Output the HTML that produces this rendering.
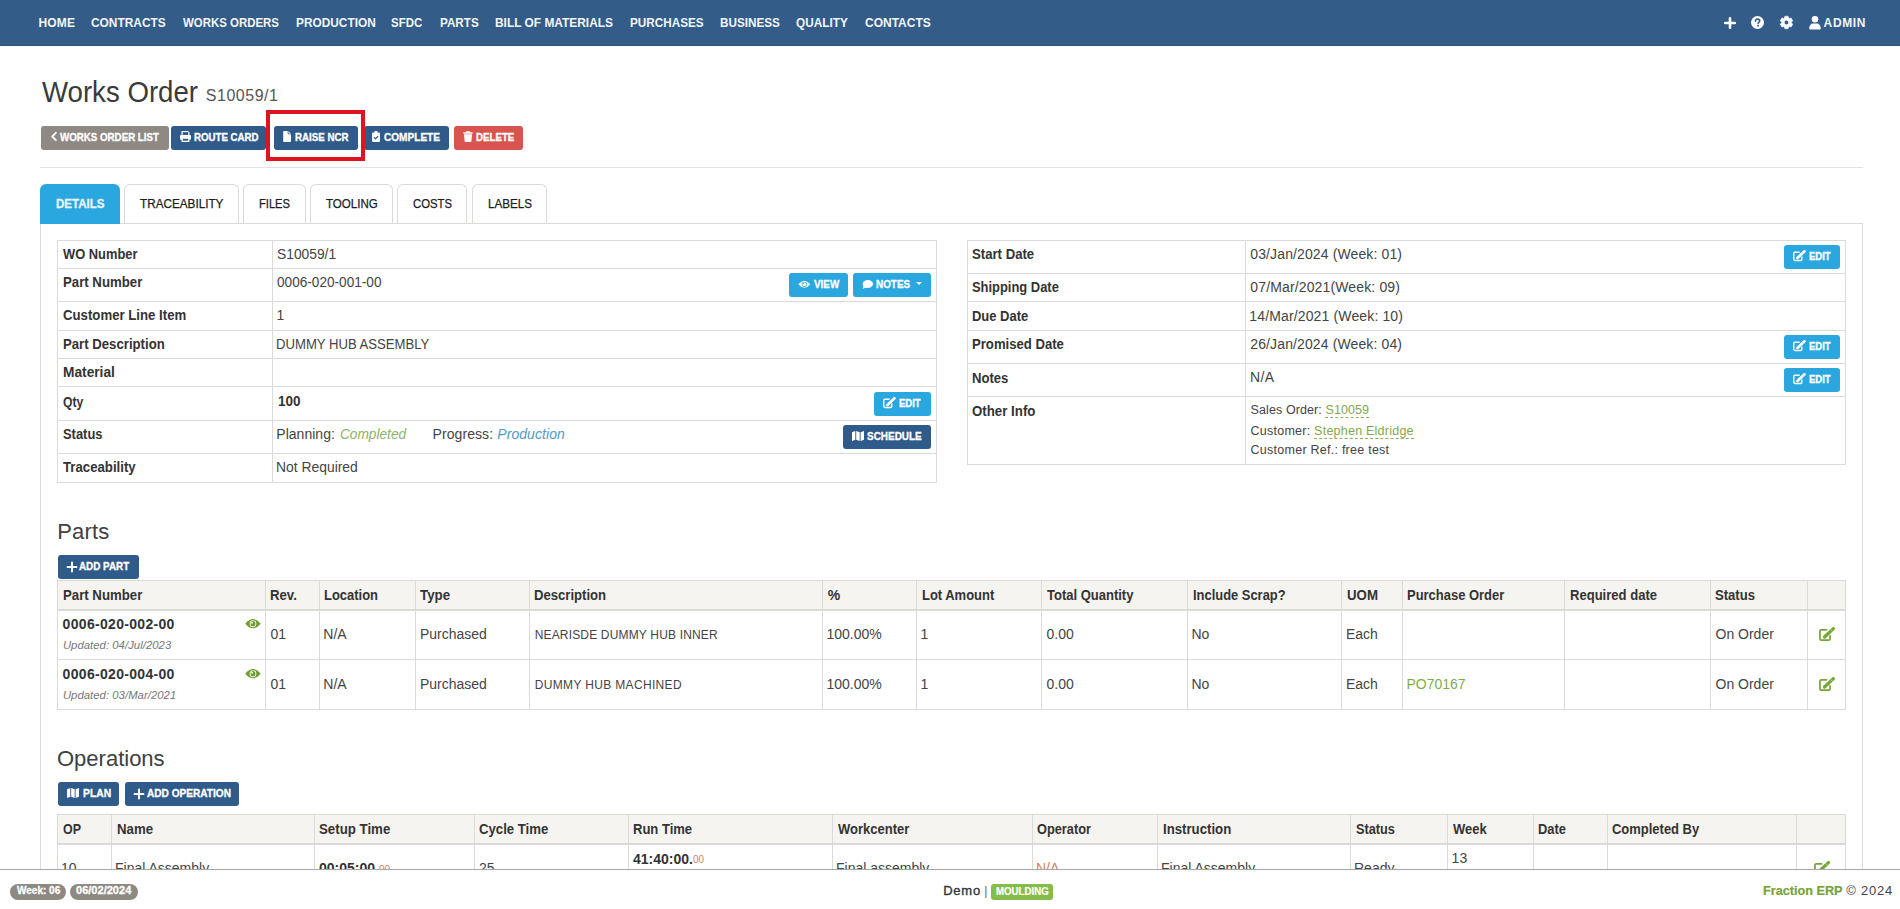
<!DOCTYPE html>
<html><head><meta charset="utf-8"><title>Works Order</title>
<style>
html,body{margin:0;padding:0;background:#fff;width:1900px;height:909px;overflow:hidden;}
body{position:relative;font-family:"Liberation Sans",sans-serif;}
.t{position:absolute;white-space:nowrap;line-height:1;}
.r{position:absolute;}
svg.r{overflow:visible}
.lk{color:#83a84c;border-bottom:1px dashed #8fae60;}
</style></head><body>
<div class="r" style="left:0px;top:0px;width:1900px;height:46px;background:#335c88;"></div>
<div class="r" style="left:0px;top:45px;width:1900px;height:1px;background:#30517a;"></div>
<div class="t" style="left:38.40px;top:16.84px;font-size:12px;color:#f3f6fa;font-weight:bold;letter-spacing:0.201px;">HOME</div>
<div class="t" style="left:91.40px;top:16.84px;font-size:12px;color:#f3f6fa;font-weight:bold;transform:scaleX(0.9917);transform-origin:0 0;">CONTRACTS</div>
<div class="t" style="left:182.60px;top:16.84px;font-size:12px;color:#f3f6fa;font-weight:bold;transform:scaleX(0.9536);transform-origin:0 0;">WORKS ORDERS</div>
<div class="t" style="left:295.50px;top:16.84px;font-size:12px;color:#f3f6fa;font-weight:bold;transform:scaleX(0.9887);transform-origin:0 0;">PRODUCTION</div>
<div class="t" style="left:391.10px;top:16.84px;font-size:12px;color:#f3f6fa;font-weight:bold;transform:scaleX(0.9545);transform-origin:0 0;">SFDC</div>
<div class="t" style="left:439.50px;top:16.84px;font-size:12px;color:#f3f6fa;font-weight:bold;transform:scaleX(0.9730);transform-origin:0 0;">PARTS</div>
<div class="t" style="left:494.80px;top:16.84px;font-size:12px;color:#f3f6fa;font-weight:bold;transform:scaleX(0.9925);transform-origin:0 0;">BILL OF MATERIALS</div>
<div class="t" style="left:629.60px;top:16.84px;font-size:12px;color:#f3f6fa;font-weight:bold;transform:scaleX(0.9769);transform-origin:0 0;">PURCHASES</div>
<div class="t" style="left:720.00px;top:16.84px;font-size:12px;color:#f3f6fa;font-weight:bold;transform:scaleX(0.9748);transform-origin:0 0;">BUSINESS</div>
<div class="t" style="left:796.00px;top:16.84px;font-size:12px;color:#f3f6fa;font-weight:bold;transform:scaleX(0.9837);transform-origin:0 0;">QUALITY</div>
<div class="t" style="left:864.60px;top:16.84px;font-size:12px;color:#f3f6fa;font-weight:bold;transform:scaleX(0.9990);transform-origin:0 0;">CONTACTS</div>
<div class="t" style="left:1823.60px;top:16.84px;font-size:12px;color:#f3f6fa;font-weight:bold;letter-spacing:0.634px;">ADMIN</div>
<svg class="r" style="left:1723.5px;top:16.5px" width="12" height="12" viewBox="0 0 12 12"><path d="M6 1.2v9.6M1.2 6h9.6" stroke="#fff" stroke-width="2.6" stroke-linecap="round"/></svg>
<svg class="r" style="left:1751px;top:16px" width="13" height="13" viewBox="0 0 13 13"><circle cx="6.5" cy="6.5" r="6.5" fill="#fff"/><path d="M4.5 5.2c0-1.3.9-2.1 2.1-2.1 1.2 0 2.1.8 2.1 1.9 0 1.4-1.6 1.5-1.6 2.5" stroke="#335c88" stroke-width="1.6" fill="none" stroke-linecap="round"/><circle cx="7" cy="9.7" r="0.95" fill="#335c88"/></svg>
<svg class="r" style="left:1779.8px;top:15.8px" width="13" height="13" viewBox="0 0 13 13"><path d="M4.83 0.22 L8.17 0.22 L8.68 2.11 L9.21 2.42 L11.10 1.91 L12.78 4.81 L11.39 6.19 L11.39 6.81 L12.78 8.19 L11.10 11.09 L9.21 10.58 L8.68 10.89 L8.17 12.78 L4.83 12.78 L4.32 10.89 L3.79 10.58 L1.90 11.09 L0.22 8.19 L1.61 6.81 L1.61 6.19 L0.22 4.81 L1.90 1.91 L3.79 2.42 L4.32 2.11Z" fill="#fff" stroke="#fff" stroke-width="0.5" stroke-linejoin="round"/><circle cx="6.5" cy="6.5" r="1.9" fill="#335c88"/></svg>
<svg class="r" style="left:1808.5px;top:16px" width="12" height="14" viewBox="0 0 12 14"><circle cx="6" cy="3.3" r="3.3" fill="#fff"/><path d="M0.2 12.6c0-3 1.7-5 3.8-5h4c2.1 0 3.8 2 3.8 5 0 .5-.4.8-.8.8H1c-.5 0-.8-.3-.8-.8z" fill="#fff"/></svg>
<div class="t" style="left:41.60px;top:76.81px;font-size:30px;color:#3a3a3a;transform:scaleX(0.9205);transform-origin:0 0;">Works Order</div>
<div class="t" style="left:205.80px;top:88.46px;font-size:16px;color:#555;letter-spacing:0.513px;">S10059/1</div>
<div class="r" style="left:41px;top:126px;width:128px;height:24px;background:#8e8a83;border-radius:3px;"></div>
<div class="r" style="left:171px;top:126px;width:95px;height:24px;background:#2f5b8a;border-radius:3px;"></div>
<div class="r" style="left:274px;top:126px;width:84px;height:24px;background:#2f5b8a;border-radius:3px;"></div>
<div class="r" style="left:364px;top:126px;width:85px;height:24px;background:#2f5b8a;border-radius:3px;"></div>
<div class="r" style="left:454px;top:126px;width:69px;height:24px;background:#d9534f;border-radius:3px;"></div>
<div class="t" style="left:59.80px;top:132.11px;font-size:10.5px;color:#fff;font-weight:bold;transform:scaleX(0.9270);transform-origin:0 0;-webkit-text-stroke:0.3px #fff;">WORKS ORDER LIST</div>
<div class="t" style="left:194.20px;top:132.11px;font-size:10.5px;color:#fff;font-weight:bold;transform:scaleX(0.9231);transform-origin:0 0;-webkit-text-stroke:0.3px #fff;">ROUTE CARD</div>
<div class="t" style="left:294.50px;top:132.11px;font-size:10.5px;color:#fff;font-weight:bold;transform:scaleX(0.9283);transform-origin:0 0;-webkit-text-stroke:0.3px #fff;">RAISE NCR</div>
<div class="t" style="left:383.50px;top:132.11px;font-size:10.5px;color:#fff;font-weight:bold;transform:scaleX(0.9600);transform-origin:0 0;-webkit-text-stroke:0.3px #fff;">COMPLETE</div>
<div class="t" style="left:475.60px;top:132.11px;font-size:10.5px;color:#fff;font-weight:bold;transform:scaleX(0.9247);transform-origin:0 0;-webkit-text-stroke:0.3px #fff;">DELETE</div>
<svg class="r" style="left:50.5px;top:132px" width="6" height="9" viewBox="0 0 6 9"><path d="M4.9 0.9L1.2 4.5L4.9 8.1" stroke="#fff" stroke-width="1.9" fill="none" stroke-linecap="round" stroke-linejoin="round"/></svg>
<svg class="r" style="left:180px;top:131px" width="11" height="11" viewBox="0 0 11 11"><path d="M1.5 0h6.6l1.4 1.4V4H1.5z" fill="#fff"/><rect x="2.7" y="1.1" width="5.6" height="2.9" fill="#2f5b8a"/><rect x="0" y="3.9" width="11" height="4.8" rx="1.2" fill="#fff"/><rect x="1.5" y="6.6" width="8" height="4.4" rx="0.4" fill="#fff"/><rect x="2.8" y="7.8" width="5.4" height="1.9" fill="#2f5b8a"/></svg>
<svg class="r" style="left:283px;top:131px" width="8" height="11" viewBox="0 0 8 11"><path d="M0.2 0.8Q0.2 0 1 0H5.2L8 2.8V10.2Q8 11 7.2 11H1Q0.2 11 0.2 10.2z" fill="#fff"/><path d="M5.1 0V2.9H8" stroke="#2f5b8a" stroke-width="0.8" fill="none"/></svg>
<svg class="r" style="left:372px;top:131px" width="8" height="11" viewBox="0 0 8 11"><rect x="0" y="1.5" width="8" height="9.4" rx="1" fill="#fff"/><rect x="2.4" y="0" width="3.2" height="2.2" rx="0.8" fill="#fff"/><path d="M2 6.4L3.5 7.9L6.1 5.1" stroke="#2f5b8a" stroke-width="1.3" fill="none"/></svg>
<svg class="r" style="left:463px;top:131px" width="10" height="11" viewBox="0 0 10 11"><path d="M3.3 0.2h3.4l0.5 1H9.6v1.5H0.4V1.2h2.4z" fill="#fff"/><path d="M1 3.3H9L8.4 10.2Q8.3 10.9 7.6 10.9H2.4Q1.7 10.9 1.6 10.2z" fill="#fff"/></svg>
<div class="r" style="left:266px;top:110px;width:91px;height:43px;border:4px solid #e0141e;"></div>
<div class="r" style="left:40px;top:167px;width:1823px;height:1px;background:#e3e3e3;"></div>
<div class="r" style="left:40px;top:223px;width:1821px;height:700px;border:1px solid #dbdad6;border-bottom:none"></div>
<div class="r" style="left:40px;top:184px;width:80px;height:40px;background:#2aa7de;border-radius:6px 6px 0 0"></div>
<div class="r" style="left:124px;top:184px;width:113px;height:38px;border:1px solid #dbdad6;border-bottom:none;border-radius:6px 6px 0 0;background:#fff"></div>
<div class="r" style="left:243px;top:184px;width:61px;height:38px;border:1px solid #dbdad6;border-bottom:none;border-radius:6px 6px 0 0;background:#fff"></div>
<div class="r" style="left:310px;top:184px;width:81px;height:38px;border:1px solid #dbdad6;border-bottom:none;border-radius:6px 6px 0 0;background:#fff"></div>
<div class="r" style="left:397px;top:184px;width:68px;height:38px;border:1px solid #dbdad6;border-bottom:none;border-radius:6px 6px 0 0;background:#fff"></div>
<div class="r" style="left:472px;top:184px;width:73px;height:38px;border:1px solid #dbdad6;border-bottom:none;border-radius:6px 6px 0 0;background:#fff"></div>
<div class="t" style="left:55.70px;top:197.64px;font-size:12px;color:#eaf6fc;font-weight:bold;transform:scaleX(0.9615);transform-origin:0 0;-webkit-text-stroke:0.3px #eaf6fc;">DETAILS</div>
<div class="t" style="left:140.00px;top:197.64px;font-size:12px;color:#1c1c1c;transform:scaleX(0.9772);transform-origin:0 0;-webkit-text-stroke:0.25px #1c1c1c;">TRACEABILITY</div>
<div class="t" style="left:258.50px;top:197.64px;font-size:12px;color:#1c1c1c;transform:scaleX(0.9298);transform-origin:0 0;-webkit-text-stroke:0.25px #1c1c1c;">FILES</div>
<div class="t" style="left:326.40px;top:197.64px;font-size:12px;color:#1c1c1c;transform:scaleX(0.9616);transform-origin:0 0;-webkit-text-stroke:0.25px #1c1c1c;">TOOLING</div>
<div class="t" style="left:413.40px;top:197.64px;font-size:12px;color:#1c1c1c;transform:scaleX(0.9435);transform-origin:0 0;-webkit-text-stroke:0.25px #1c1c1c;">COSTS</div>
<div class="t" style="left:488.00px;top:197.64px;font-size:12px;color:#1c1c1c;transform:scaleX(0.9700);transform-origin:0 0;-webkit-text-stroke:0.25px #1c1c1c;">LABELS</div>
<div class="r" style="left:57px;top:240px;width:1px;height:243px;background:#dbdad6;"></div>
<div class="r" style="left:272px;top:240px;width:1px;height:243px;background:#dbdad6;"></div>
<div class="r" style="left:936px;top:240px;width:1px;height:243px;background:#dbdad6;"></div>
<div class="r" style="left:57px;top:240px;width:880px;height:1px;background:#dbdad6;"></div>
<div class="r" style="left:57px;top:268px;width:880px;height:1px;background:#dbdad6;"></div>
<div class="r" style="left:57px;top:301px;width:880px;height:1px;background:#dbdad6;"></div>
<div class="r" style="left:57px;top:330px;width:880px;height:1px;background:#dbdad6;"></div>
<div class="r" style="left:57px;top:358px;width:880px;height:1px;background:#dbdad6;"></div>
<div class="r" style="left:57px;top:386px;width:880px;height:1px;background:#dbdad6;"></div>
<div class="r" style="left:57px;top:420px;width:880px;height:1px;background:#dbdad6;"></div>
<div class="r" style="left:57px;top:453px;width:880px;height:1px;background:#dbdad6;"></div>
<div class="r" style="left:57px;top:482px;width:880px;height:1px;background:#dbdad6;"></div>
<div class="t" style="left:62.65px;top:247.25px;font-size:14px;color:#333;font-weight:bold;transform:scaleX(0.9209);transform-origin:0 0;">WO Number</div>
<div class="t" style="left:62.65px;top:275.45px;font-size:14px;color:#333;font-weight:bold;transform:scaleX(0.9436);transform-origin:0 0;">Part Number</div>
<div class="t" style="left:62.65px;top:308.05px;font-size:14px;color:#333;font-weight:bold;transform:scaleX(0.9429);transform-origin:0 0;">Customer Line Item</div>
<div class="t" style="left:62.65px;top:337.15px;font-size:14px;color:#333;font-weight:bold;transform:scaleX(0.9406);transform-origin:0 0;">Part Description</div>
<div class="t" style="left:62.65px;top:365.45px;font-size:14px;color:#333;font-weight:bold;transform:scaleX(0.9804);transform-origin:0 0;">Material</div>
<div class="t" style="left:62.65px;top:394.85px;font-size:14px;color:#333;font-weight:bold;transform:scaleX(0.8704);transform-origin:0 0;">Qty</div>
<div class="t" style="left:62.65px;top:427.45px;font-size:14px;color:#333;font-weight:bold;transform:scaleX(0.9233);transform-origin:0 0;">Status</div>
<div class="t" style="left:62.65px;top:460.15px;font-size:14px;color:#333;font-weight:bold;transform:scaleX(0.9436);transform-origin:0 0;">Traceability</div>
<div class="t" style="left:277.20px;top:247.05px;font-size:14px;color:#444;transform:scaleX(0.9857);transform-origin:0 0;">S10059/1</div>
<div class="t" style="left:277.40px;top:275.15px;font-size:14px;color:#444;transform:scaleX(0.9727);transform-origin:0 0;">0006-020-001-00</div>
<div class="t" style="left:276.50px;top:307.75px;font-size:14px;color:#444;">1</div>
<div class="t" style="left:276.16px;top:336.85px;font-size:14px;color:#444;transform:scaleX(0.9372);transform-origin:0 0;">DUMMY HUB ASSEMBLY</div>
<div class="t" style="left:277.80px;top:394.05px;font-size:14px;color:#333;font-weight:bold;transform:scaleX(0.9630);transform-origin:0 0;">100</div>
<div class="t" style="left:276.30px;top:426.65px;font-size:14px;color:#444;letter-spacing:0.026px;">Planning:</div>
<div class="t" style="left:339.70px;top:426.65px;font-size:14px;color:#8db26a;font-style:italic;transform:scaleX(0.9765);transform-origin:0 0;">Completed</div>
<div class="t" style="left:432.60px;top:426.65px;font-size:14px;color:#444;letter-spacing:0.072px;">Progress:</div>
<div class="t" style="left:497.30px;top:426.65px;font-size:14px;color:#4f9bcb;font-style:italic;letter-spacing:0.062px;">Production</div>
<div class="t" style="left:276.31px;top:459.65px;font-size:14px;color:#444;transform:scaleX(0.9913);transform-origin:0 0;">Not Required</div>
<div class="r" style="left:789px;top:273px;width:59px;height:24px;background:#2aa7de;border-radius:3px;"></div>
<div class="r" style="left:853px;top:273px;width:78px;height:24px;background:#2aa7de;border-radius:3px;"></div>
<div class="t" style="left:813.70px;top:278.81px;font-size:10.5px;color:#fff;font-weight:bold;transform:scaleX(0.9397);transform-origin:0 0;-webkit-text-stroke:0.3px #fff;">VIEW</div>
<div class="t" style="left:876.00px;top:278.81px;font-size:10.5px;color:#fff;font-weight:bold;transform:scaleX(0.9428);transform-origin:0 0;-webkit-text-stroke:0.3px #fff;">NOTES</div>
<svg class="r" style="left:797.6px;top:279.6px" width="12.6" height="8.6" viewBox="0 0 16 11" preserveAspectRatio="none"><path d="M0.3 5.5Q8 -3.5 15.7 5.5Q8 14.5 0.3 5.5z" fill="#fff"/><circle cx="8" cy="5.5" r="3.4" fill="#2aa7de"/><circle cx="8" cy="5.5" r="2.5" fill="#fff"/><circle cx="7.1" cy="4.6" r="0.9" fill="#2aa7de"/></svg>
<svg class="r" style="left:861.7px;top:279.8px" width="11" height="9" viewBox="0 0 11 9"><ellipse cx="5.8" cy="4" rx="5.2" ry="4" fill="#fff"/><path d="M1.6 5.5L0.6 8.8L4.5 7.4z" fill="#fff"/></svg>
<svg class="r" style="left:916.2px;top:282.3px" width="6" height="3" viewBox="0 0 6 3"><path d="M0 0H6L3 3z" fill="#fff"/></svg>
<div class="r" style="left:874px;top:392px;width:57px;height:24px;background:#2aa7de;border-radius:3px;"></div>
<svg class="r" style="left:883px;top:397.3px" width="12.80" height="11.20" viewBox="0 0 16 14"><path d="M8.3 2.75H2.3Q0.95 2.75 0.95 4.1V11.7Q0.95 13.05 2.3 13.05H9.7Q11.05 13.05 11.05 11.7V8.2" stroke="#fff" stroke-width="1.75" fill="none"/><path d="M5.5 10L14.4 1.6" stroke="#fff" stroke-width="3.3" stroke-linecap="round"/><path d="M11.9 2.6L13.6 4.5" stroke="#2aa7de" stroke-width="0.6" opacity="0.8"/></svg>
<div class="t" style="left:898.90px;top:398.11px;font-size:10.5px;color:#fff;font-weight:bold;transform:scaleX(0.9019);transform-origin:0 0;-webkit-text-stroke:0.3px #fff;">EDIT</div>
<div class="r" style="left:843px;top:425px;width:88px;height:24px;background:#2f5b8a;border-radius:3px;"></div>
<svg class="r" style="left:852px;top:430.5px" width="12" height="10" viewBox="0 0 12 10"><path d="M0 1.2L3.3 0V8.8L0 10z" fill="#fff"/><path d="M4.2 0L7.7 1.2V10L4.2 8.8z" fill="#fff"/><path d="M8.6 1.2L12 0V8.8L8.6 10z" fill="#fff"/></svg>
<div class="t" style="left:867.00px;top:431.11px;font-size:10.5px;color:#fff;font-weight:bold;transform:scaleX(0.9472);transform-origin:0 0;-webkit-text-stroke:0.3px #fff;">SCHEDULE</div>
<div class="r" style="left:967px;top:240px;width:1px;height:225px;background:#dbdad6;"></div>
<div class="r" style="left:1245px;top:240px;width:1px;height:225px;background:#dbdad6;"></div>
<div class="r" style="left:1845px;top:240px;width:1px;height:225px;background:#dbdad6;"></div>
<div class="r" style="left:967px;top:240px;width:879px;height:1px;background:#dbdad6;"></div>
<div class="r" style="left:967px;top:273px;width:879px;height:1px;background:#dbdad6;"></div>
<div class="r" style="left:967px;top:301px;width:879px;height:1px;background:#dbdad6;"></div>
<div class="r" style="left:967px;top:330px;width:879px;height:1px;background:#dbdad6;"></div>
<div class="r" style="left:967px;top:363px;width:879px;height:1px;background:#dbdad6;"></div>
<div class="r" style="left:967px;top:396px;width:879px;height:1px;background:#dbdad6;"></div>
<div class="r" style="left:967px;top:464px;width:879px;height:1px;background:#dbdad6;"></div>
<div class="t" style="left:971.90px;top:247.35px;font-size:14px;color:#333;font-weight:bold;transform:scaleX(0.9405);transform-origin:0 0;">Start Date</div>
<div class="t" style="left:971.90px;top:280.05px;font-size:14px;color:#333;font-weight:bold;transform:scaleX(0.9224);transform-origin:0 0;">Shipping Date</div>
<div class="t" style="left:971.90px;top:308.85px;font-size:14px;color:#333;font-weight:bold;transform:scaleX(0.9262);transform-origin:0 0;">Due Date</div>
<div class="t" style="left:971.90px;top:337.45px;font-size:14px;color:#333;font-weight:bold;transform:scaleX(0.9374);transform-origin:0 0;">Promised Date</div>
<div class="t" style="left:971.90px;top:370.65px;font-size:14px;color:#333;font-weight:bold;transform:scaleX(0.9358);transform-origin:0 0;">Notes</div>
<div class="t" style="left:971.90px;top:404.45px;font-size:14px;color:#333;font-weight:bold;transform:scaleX(0.9483);transform-origin:0 0;">Other Info</div>
<div class="t" style="left:1250.30px;top:247.35px;font-size:14px;color:#444;letter-spacing:0.119px;">03/Jan/2024 (Week: 01)</div>
<div class="t" style="left:1250.30px;top:279.75px;font-size:14px;color:#444;letter-spacing:0.142px;">07/Mar/2021(Week: 09)</div>
<div class="t" style="left:1249.30px;top:308.55px;font-size:14px;color:#444;letter-spacing:0.141px;">14/Mar/2021 (Week: 10)</div>
<div class="t" style="left:1250.30px;top:337.15px;font-size:14px;color:#444;letter-spacing:0.119px;">26/Jan/2024 (Week: 04)</div>
<div class="t" style="left:1250.00px;top:369.85px;font-size:14px;color:#444;letter-spacing:0.350px;">N/A</div>
<div class="t" style="left:1250.60px;top:403.92px;font-size:12.5px;color:#444;letter-spacing:0.095px;">Sales Order: <span class="lk">S10059</span></div>
<div class="t" style="left:1250.60px;top:424.92px;font-size:12.5px;color:#444;letter-spacing:0.237px;">Customer: <span class="lk">Stephen Eldridge</span></div>
<div class="t" style="left:1250.60px;top:443.92px;font-size:12.5px;color:#444;letter-spacing:0.252px;">Customer Ref.: free test</div>
<div class="r" style="left:1784px;top:245px;width:56px;height:24px;background:#2aa7de;border-radius:3px;"></div>
<svg class="r" style="left:1793px;top:250.3px" width="12.80" height="11.20" viewBox="0 0 16 14"><path d="M8.3 2.75H2.3Q0.95 2.75 0.95 4.1V11.7Q0.95 13.05 2.3 13.05H9.7Q11.05 13.05 11.05 11.7V8.2" stroke="#fff" stroke-width="1.75" fill="none"/><path d="M5.5 10L14.4 1.6" stroke="#fff" stroke-width="3.3" stroke-linecap="round"/><path d="M11.9 2.6L13.6 4.5" stroke="#2aa7de" stroke-width="0.6" opacity="0.8"/></svg>
<div class="t" style="left:1808.90px;top:251.11px;font-size:10.5px;color:#fff;font-weight:bold;transform:scaleX(0.9019);transform-origin:0 0;-webkit-text-stroke:0.3px #fff;">EDIT</div>
<div class="r" style="left:1784px;top:335px;width:56px;height:24px;background:#2aa7de;border-radius:3px;"></div>
<svg class="r" style="left:1793px;top:340.3px" width="12.80" height="11.20" viewBox="0 0 16 14"><path d="M8.3 2.75H2.3Q0.95 2.75 0.95 4.1V11.7Q0.95 13.05 2.3 13.05H9.7Q11.05 13.05 11.05 11.7V8.2" stroke="#fff" stroke-width="1.75" fill="none"/><path d="M5.5 10L14.4 1.6" stroke="#fff" stroke-width="3.3" stroke-linecap="round"/><path d="M11.9 2.6L13.6 4.5" stroke="#2aa7de" stroke-width="0.6" opacity="0.8"/></svg>
<div class="t" style="left:1808.90px;top:341.11px;font-size:10.5px;color:#fff;font-weight:bold;transform:scaleX(0.9019);transform-origin:0 0;-webkit-text-stroke:0.3px #fff;">EDIT</div>
<div class="r" style="left:1784px;top:368px;width:56px;height:24px;background:#2aa7de;border-radius:3px;"></div>
<svg class="r" style="left:1793px;top:373.3px" width="12.80" height="11.20" viewBox="0 0 16 14"><path d="M8.3 2.75H2.3Q0.95 2.75 0.95 4.1V11.7Q0.95 13.05 2.3 13.05H9.7Q11.05 13.05 11.05 11.7V8.2" stroke="#fff" stroke-width="1.75" fill="none"/><path d="M5.5 10L14.4 1.6" stroke="#fff" stroke-width="3.3" stroke-linecap="round"/><path d="M11.9 2.6L13.6 4.5" stroke="#2aa7de" stroke-width="0.6" opacity="0.8"/></svg>
<div class="t" style="left:1808.90px;top:374.11px;font-size:10.5px;color:#fff;font-weight:bold;transform:scaleX(0.9019);transform-origin:0 0;-webkit-text-stroke:0.3px #fff;">EDIT</div>
<div class="t" style="left:57.20px;top:521.38px;font-size:22px;color:#404040;letter-spacing:0.163px;">Parts</div>
<div class="r" style="left:58px;top:555px;width:81px;height:24px;background:#2f5b8a;border-radius:3px;"></div>
<svg class="r" style="left:67px;top:561.5px" width="10" height="10" viewBox="0 0 10 10"><path d="M5 0.6V9.4M0.6 5H9.4" stroke="#fff" stroke-width="2" stroke-linecap="round"/></svg>
<div class="t" style="left:79.30px;top:561.41px;font-size:10.5px;color:#fff;font-weight:bold;transform:scaleX(0.9379);transform-origin:0 0;-webkit-text-stroke:0.3px #fff;">ADD PART</div>
<div class="r" style="left:58px;top:581px;width:1787px;height:28px;background:#f6f4f0;"></div>
<div class="r" style="left:57px;top:580px;width:1px;height:130px;background:#dbdad6;"></div>
<div class="r" style="left:265px;top:580px;width:1px;height:130px;background:#dbdad6;"></div>
<div class="r" style="left:319px;top:580px;width:1px;height:130px;background:#dbdad6;"></div>
<div class="r" style="left:415px;top:580px;width:1px;height:130px;background:#dbdad6;"></div>
<div class="r" style="left:529px;top:580px;width:1px;height:130px;background:#dbdad6;"></div>
<div class="r" style="left:822px;top:580px;width:1px;height:130px;background:#dbdad6;"></div>
<div class="r" style="left:916px;top:580px;width:1px;height:130px;background:#dbdad6;"></div>
<div class="r" style="left:1041px;top:580px;width:1px;height:130px;background:#dbdad6;"></div>
<div class="r" style="left:1187px;top:580px;width:1px;height:130px;background:#dbdad6;"></div>
<div class="r" style="left:1341px;top:580px;width:1px;height:130px;background:#dbdad6;"></div>
<div class="r" style="left:1402px;top:580px;width:1px;height:130px;background:#dbdad6;"></div>
<div class="r" style="left:1564px;top:580px;width:1px;height:130px;background:#dbdad6;"></div>
<div class="r" style="left:1710px;top:580px;width:1px;height:130px;background:#dbdad6;"></div>
<div class="r" style="left:1807px;top:580px;width:1px;height:130px;background:#dbdad6;"></div>
<div class="r" style="left:1845px;top:580px;width:1px;height:130px;background:#dbdad6;"></div>
<div class="r" style="left:57px;top:580px;width:1789px;height:1px;background:#dbdad6;"></div>
<div class="r" style="left:57px;top:609px;width:1789px;height:2px;background:#dbdad6;"></div>
<div class="r" style="left:57px;top:659px;width:1789px;height:1px;background:#dbdad6;"></div>
<div class="r" style="left:57px;top:709px;width:1789px;height:1px;background:#dbdad6;"></div>
<div class="t" style="left:62.60px;top:588.05px;font-size:14px;color:#333;font-weight:bold;transform:scaleX(0.9436);transform-origin:0 0;">Part Number</div>
<div class="t" style="left:270.40px;top:588.05px;font-size:14px;color:#333;font-weight:bold;transform:scaleX(0.9405);transform-origin:0 0;">Rev.</div>
<div class="t" style="left:324.30px;top:588.05px;font-size:14px;color:#333;font-weight:bold;transform:scaleX(0.9259);transform-origin:0 0;">Location</div>
<div class="t" style="left:420.00px;top:588.05px;font-size:14px;color:#333;font-weight:bold;transform:scaleX(0.9545);transform-origin:0 0;">Type</div>
<div class="t" style="left:534.30px;top:588.05px;font-size:14px;color:#333;font-weight:bold;transform:scaleX(0.9364);transform-origin:0 0;">Description</div>
<div class="t" style="left:827.80px;top:588.05px;font-size:14px;color:#333;font-weight:bold;">%</div>
<div class="t" style="left:921.60px;top:588.05px;font-size:14px;color:#333;font-weight:bold;transform:scaleX(0.9256);transform-origin:0 0;">Lot Amount</div>
<div class="t" style="left:1046.50px;top:588.05px;font-size:14px;color:#333;font-weight:bold;transform:scaleX(0.9283);transform-origin:0 0;">Total Quantity</div>
<div class="t" style="left:1192.50px;top:588.05px;font-size:14px;color:#333;font-weight:bold;transform:scaleX(0.9228);transform-origin:0 0;">Include Scrap?</div>
<div class="t" style="left:1346.70px;top:588.05px;font-size:14px;color:#333;font-weight:bold;transform:scaleX(0.9469);transform-origin:0 0;">UOM</div>
<div class="t" style="left:1407.40px;top:588.05px;font-size:14px;color:#333;font-weight:bold;transform:scaleX(0.9261);transform-origin:0 0;">Purchase Order</div>
<div class="t" style="left:1569.50px;top:588.05px;font-size:14px;color:#333;font-weight:bold;transform:scaleX(0.9320);transform-origin:0 0;">Required date</div>
<div class="t" style="left:1715.40px;top:588.05px;font-size:14px;color:#333;font-weight:bold;transform:scaleX(0.9349);transform-origin:0 0;">Status</div>
<div class="t" style="left:62.60px;top:617.15px;font-size:14px;color:#333;font-weight:bold;letter-spacing:0.312px;">0006-020-002-00</div>
<div class="t" style="left:62.90px;top:640.43px;font-size:11.3px;color:#777;font-style:italic;letter-spacing:0.046px;">Updated: 04/Jul/2023</div>
<svg class="r" style="left:244.8px;top:618.2px" width="16" height="11.4" viewBox="0 0 16 11" preserveAspectRatio="none"><path d="M0.3 5.5Q8 -3.5 15.7 5.5Q8 14.5 0.3 5.5z" fill="#6f9c30"/><circle cx="8" cy="5.5" r="3.4" fill="#fff"/><circle cx="8" cy="5.5" r="2.5" fill="#6f9c30"/><circle cx="7.1" cy="4.6" r="0.9" fill="#fff"/></svg>
<div class="t" style="left:270.50px;top:627.15px;font-size:14px;color:#444;">01</div>
<div class="t" style="left:323.30px;top:627.15px;font-size:14px;color:#444;">N/A</div>
<div class="t" style="left:419.50px;top:627.15px;font-size:14px;color:#444;transform:scaleX(0.9978);transform-origin:0 0;">Purchased</div>
<div class="t" style="left:534.70px;top:628.84px;font-size:12px;color:#444;letter-spacing:0.166px;">NEARISDE DUMMY HUB INNER</div>
<div class="t" style="left:826.50px;top:627.15px;font-size:14px;color:#444;">100.00%</div>
<div class="t" style="left:920.50px;top:627.15px;font-size:14px;color:#444;">1</div>
<div class="t" style="left:1046.50px;top:627.15px;font-size:14px;color:#444;">0.00</div>
<div class="t" style="left:1191.50px;top:627.15px;font-size:14px;color:#444;">No</div>
<div class="t" style="left:1346.00px;top:627.15px;font-size:14px;color:#444;">Each</div>
<div class="t" style="left:1715.50px;top:627.15px;font-size:14px;color:#444;">On Order</div>
<svg class="r" style="left:1819px;top:627px" width="16.00" height="14.00" viewBox="0 0 16 14"><path d="M8.3 2.75H2.3Q0.95 2.75 0.95 4.1V11.7Q0.95 13.05 2.3 13.05H9.7Q11.05 13.05 11.05 11.7V8.2" stroke="#78a53a" stroke-width="1.75" fill="none"/><path d="M5.5 10L14.4 1.6" stroke="#78a53a" stroke-width="3.3" stroke-linecap="round"/><path d="M11.9 2.6L13.6 4.5" stroke="#fff" stroke-width="0.6" opacity="0.8"/></svg>
<div class="t" style="left:62.60px;top:666.85px;font-size:14px;color:#333;font-weight:bold;letter-spacing:0.312px;">0006-020-004-00</div>
<div class="t" style="left:62.90px;top:690.13px;font-size:11.3px;color:#777;font-style:italic;letter-spacing:0.046px;">Updated: 03/Mar/2021</div>
<svg class="r" style="left:244.8px;top:667.9000000000001px" width="16" height="11.4" viewBox="0 0 16 11" preserveAspectRatio="none"><path d="M0.3 5.5Q8 -3.5 15.7 5.5Q8 14.5 0.3 5.5z" fill="#6f9c30"/><circle cx="8" cy="5.5" r="3.4" fill="#fff"/><circle cx="8" cy="5.5" r="2.5" fill="#6f9c30"/><circle cx="7.1" cy="4.6" r="0.9" fill="#fff"/></svg>
<div class="t" style="left:270.50px;top:676.85px;font-size:14px;color:#444;">01</div>
<div class="t" style="left:323.30px;top:676.85px;font-size:14px;color:#444;">N/A</div>
<div class="t" style="left:419.50px;top:676.85px;font-size:14px;color:#444;transform:scaleX(0.9978);transform-origin:0 0;">Purchased</div>
<div class="t" style="left:534.70px;top:678.54px;font-size:12px;color:#444;letter-spacing:0.343px;">DUMMY HUB MACHINED</div>
<div class="t" style="left:826.50px;top:676.85px;font-size:14px;color:#444;">100.00%</div>
<div class="t" style="left:920.50px;top:676.85px;font-size:14px;color:#444;">1</div>
<div class="t" style="left:1046.50px;top:676.85px;font-size:14px;color:#444;">0.00</div>
<div class="t" style="left:1191.50px;top:676.85px;font-size:14px;color:#444;">No</div>
<div class="t" style="left:1346.00px;top:676.85px;font-size:14px;color:#444;">Each</div>
<div class="t" style="left:1406.50px;top:676.85px;font-size:14px;color:#7fad45;">PO70167</div>
<div class="t" style="left:1715.50px;top:676.85px;font-size:14px;color:#444;">On Order</div>
<svg class="r" style="left:1819px;top:676.7px" width="16.00" height="14.00" viewBox="0 0 16 14"><path d="M8.3 2.75H2.3Q0.95 2.75 0.95 4.1V11.7Q0.95 13.05 2.3 13.05H9.7Q11.05 13.05 11.05 11.7V8.2" stroke="#78a53a" stroke-width="1.75" fill="none"/><path d="M5.5 10L14.4 1.6" stroke="#78a53a" stroke-width="3.3" stroke-linecap="round"/><path d="M11.9 2.6L13.6 4.5" stroke="#fff" stroke-width="0.6" opacity="0.8"/></svg>
<div class="t" style="left:56.90px;top:748.18px;font-size:22px;color:#404040;transform:scaleX(0.9999);transform-origin:0 0;">Operations</div>
<div class="r" style="left:58px;top:782px;width:61px;height:24px;background:#2f5b8a;border-radius:3px;"></div>
<svg class="r" style="left:67px;top:788px" width="12" height="10" viewBox="0 0 12 10"><path d="M0 1.2L3.3 0V8.8L0 10z" fill="#fff"/><path d="M4.2 0L7.7 1.2V10L4.2 8.8z" fill="#fff"/><path d="M8.6 1.2L12 0V8.8L8.6 10z" fill="#fff"/></svg>
<div class="t" style="left:82.70px;top:787.91px;font-size:10.5px;color:#fff;font-weight:bold;transform:scaleX(0.9857);transform-origin:0 0;-webkit-text-stroke:0.3px #fff;">PLAN</div>
<div class="r" style="left:125px;top:782px;width:114px;height:24px;background:#2f5b8a;border-radius:3px;"></div>
<svg class="r" style="left:134px;top:788.5px" width="10" height="10" viewBox="0 0 10 10"><path d="M5 0.6V9.4M0.6 5H9.4" stroke="#fff" stroke-width="2" stroke-linecap="round"/></svg>
<div class="t" style="left:146.60px;top:787.91px;font-size:10.5px;color:#fff;font-weight:bold;transform:scaleX(0.9617);transform-origin:0 0;-webkit-text-stroke:0.3px #fff;">ADD OPERATION</div>
<div class="r" style="left:58px;top:815px;width:1787px;height:28px;background:#f6f4f0;"></div>
<div class="r" style="left:57px;top:814px;width:1px;height:87px;background:#dbdad6;"></div>
<div class="r" style="left:111px;top:814px;width:1px;height:87px;background:#dbdad6;"></div>
<div class="r" style="left:314px;top:814px;width:1px;height:87px;background:#dbdad6;"></div>
<div class="r" style="left:474px;top:814px;width:1px;height:87px;background:#dbdad6;"></div>
<div class="r" style="left:628px;top:814px;width:1px;height:87px;background:#dbdad6;"></div>
<div class="r" style="left:832px;top:814px;width:1px;height:87px;background:#dbdad6;"></div>
<div class="r" style="left:1032px;top:814px;width:1px;height:87px;background:#dbdad6;"></div>
<div class="r" style="left:1157px;top:814px;width:1px;height:87px;background:#dbdad6;"></div>
<div class="r" style="left:1350px;top:814px;width:1px;height:87px;background:#dbdad6;"></div>
<div class="r" style="left:1447px;top:814px;width:1px;height:87px;background:#dbdad6;"></div>
<div class="r" style="left:1533px;top:814px;width:1px;height:87px;background:#dbdad6;"></div>
<div class="r" style="left:1607px;top:814px;width:1px;height:87px;background:#dbdad6;"></div>
<div class="r" style="left:1796px;top:814px;width:1px;height:87px;background:#dbdad6;"></div>
<div class="r" style="left:1845px;top:814px;width:1px;height:87px;background:#dbdad6;"></div>
<div class="r" style="left:57px;top:814px;width:1789px;height:1px;background:#dbdad6;"></div>
<div class="r" style="left:57px;top:843px;width:1789px;height:2px;background:#dbdad6;"></div>
<div class="r" style="left:57px;top:900px;width:1789px;height:1px;background:#dbdad6;"></div>
<div class="t" style="left:62.60px;top:822.45px;font-size:14px;color:#333;font-weight:bold;transform:scaleX(0.8899);transform-origin:0 0;">OP</div>
<div class="t" style="left:116.80px;top:822.45px;font-size:14px;color:#333;font-weight:bold;transform:scaleX(0.9467);transform-origin:0 0;">Name</div>
<div class="t" style="left:318.80px;top:822.45px;font-size:14px;color:#333;font-weight:bold;transform:scaleX(0.9481);transform-origin:0 0;">Setup Time</div>
<div class="t" style="left:478.90px;top:822.45px;font-size:14px;color:#333;font-weight:bold;transform:scaleX(0.9407);transform-origin:0 0;">Cycle Time</div>
<div class="t" style="left:632.90px;top:822.45px;font-size:14px;color:#333;font-weight:bold;transform:scaleX(0.9303);transform-origin:0 0;">Run Time</div>
<div class="t" style="left:837.90px;top:822.45px;font-size:14px;color:#333;font-weight:bold;transform:scaleX(0.9286);transform-origin:0 0;">Workcenter</div>
<div class="t" style="left:1037.10px;top:822.45px;font-size:14px;color:#333;font-weight:bold;transform:scaleX(0.9116);transform-origin:0 0;">Operator</div>
<div class="t" style="left:1162.50px;top:822.45px;font-size:14px;color:#333;font-weight:bold;transform:scaleX(0.9432);transform-origin:0 0;">Instruction</div>
<div class="t" style="left:1355.90px;top:822.45px;font-size:14px;color:#333;font-weight:bold;transform:scaleX(0.9093);transform-origin:0 0;">Status</div>
<div class="t" style="left:1452.90px;top:822.45px;font-size:14px;color:#333;font-weight:bold;transform:scaleX(0.9279);transform-origin:0 0;">Week</div>
<div class="t" style="left:1538.30px;top:822.45px;font-size:14px;color:#333;font-weight:bold;transform:scaleX(0.9195);transform-origin:0 0;">Date</div>
<div class="t" style="left:1612.10px;top:822.45px;font-size:14px;color:#333;font-weight:bold;transform:scaleX(0.9265);transform-origin:0 0;">Completed By</div>
<div class="t" style="left:61.00px;top:861.15px;font-size:14px;color:#444;">10</div>
<div class="t" style="left:115.00px;top:861.15px;font-size:14px;color:#444;">Final Assembly</div>
<div class="t" style="left:319.00px;top:861.15px;font-size:14px;color:#333;font-weight:bold;">00:05:00</div>
<div class="t" style="left:379.00px;top:864.53px;font-size:10px;color:#e08060;">00</div>
<div class="t" style="left:479.00px;top:861.15px;font-size:14px;color:#444;">25</div>
<div class="t" style="left:633.00px;top:851.65px;font-size:14px;color:#333;font-weight:bold;">41:40:00.</div>
<div class="t" style="left:693.00px;top:855.03px;font-size:10px;color:#e08060;">00</div>
<div class="t" style="left:836.00px;top:861.15px;font-size:14px;color:#444;">Final assembly</div>
<div class="t" style="left:1036.00px;top:861.15px;font-size:14px;color:#e07a5f;">N/A</div>
<div class="t" style="left:1161.00px;top:861.15px;font-size:14px;color:#444;">Final Assembly</div>
<div class="t" style="left:1354.00px;top:861.15px;font-size:14px;color:#444;">Ready</div>
<div class="t" style="left:1451.60px;top:850.95px;font-size:14px;color:#444;">13</div>
<svg class="r" style="left:1814px;top:861px" width="16.00" height="14.00" viewBox="0 0 16 14"><path d="M8.3 2.75H2.3Q0.95 2.75 0.95 4.1V11.7Q0.95 13.05 2.3 13.05H9.7Q11.05 13.05 11.05 11.7V8.2" stroke="#78a53a" stroke-width="1.75" fill="none"/><path d="M5.5 10L14.4 1.6" stroke="#78a53a" stroke-width="3.3" stroke-linecap="round"/><path d="M11.9 2.6L13.6 4.5" stroke="#fff" stroke-width="0.6" opacity="0.8"/></svg>
<div class="r" style="left:0px;top:869px;width:1900px;height:40px;background:#fff;"></div>
<div class="r" style="left:0px;top:869px;width:1900px;height:1px;background:#a6a6a6;"></div>
<div class="r" style="left:10px;top:884px;width:56px;height:15.5px;border-radius:8px;background:#8e8a83"></div>
<div class="r" style="left:70px;top:884px;width:68px;height:15.5px;border-radius:8px;background:#8e8a83"></div>
<div class="t" style="left:16.50px;top:885.43px;font-size:11.3px;color:#fff;font-weight:bold;transform:scaleX(0.8868);transform-origin:0 0;-webkit-text-stroke:0.3px #fff;">Week: 06</div>
<div class="t" style="left:76.30px;top:885.43px;font-size:11.3px;color:#fff;font-weight:bold;transform:scaleX(0.9780);transform-origin:0 0;-webkit-text-stroke:0.3px #fff;">06/02/2024</div>
<div class="t" style="left:943.20px;top:883.80px;font-size:13px;color:#2d3540;letter-spacing:0.784px;-webkit-text-stroke:0.35px #2d3540;">Demo</div>
<div class="t" style="left:984.30px;top:884.64px;font-size:12px;color:#666;">|</div>
<div class="r" style="left:991px;top:884px;width:62px;height:15.5px;border-radius:3px;background:#86bd4a"></div>
<div class="t" style="left:995.50px;top:886.11px;font-size:10.5px;color:#fff;font-weight:bold;transform:scaleX(0.9212);transform-origin:0 0;-webkit-text-stroke:0.2px #fff;">MOULDING</div>
<div class="t" style="left:1762.60px;top:883.70px;font-size:13px;color:#76a338;font-weight:bold;transform:scaleX(0.9749);transform-origin:0 0;-webkit-text-stroke:0.2px #76a338;">Fraction ERP</div>
<div class="t" style="left:1846.30px;top:883.70px;font-size:13px;color:#444;letter-spacing:0.764px;">© 2024</div>
</body></html>
